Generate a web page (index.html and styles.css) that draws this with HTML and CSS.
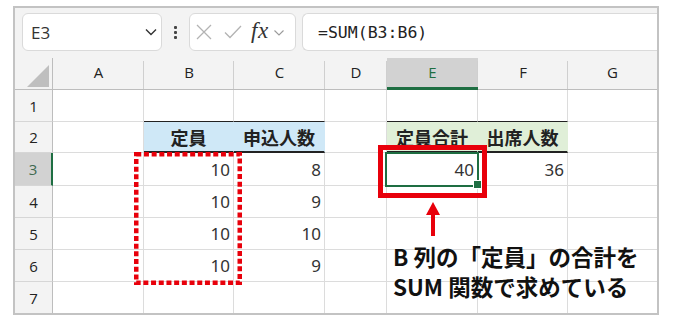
FILE: index.html
```html
<!DOCTYPE html>
<html lang="ja">
<head>
<meta charset="utf-8">
<title>SUM</title>
<link rel="stylesheet" href="styles.css">
</head>
<body>
<div class="frame">
  <div class="toolbar">
    <div class="namebox">
      <span class="nb-text">E3</span>
      <svg class="nb-chev" width="12" height="8" viewBox="0 0 12 8"><path d="M1 1.5 L6 6.5 L11 1.5" fill="none" stroke="#333" stroke-width="1.4"/></svg>
    </div>
    <div class="dots"><i></i><i></i><i></i></div>
    <div class="fxbox">
      <svg class="ic-x" width="16" height="16" viewBox="0 0 16 16"><path d="M1 1 L15 15 M15 1 L1 15" stroke="#b3b3b3" stroke-width="1.3" fill="none"/></svg>
      <svg class="ic-check" width="18" height="14" viewBox="0 0 18 14"><path d="M1 7.5 L6 12.5 L17 1" stroke="#b3b3b3" stroke-width="1.3" fill="none"/></svg>
      <span class="fx">fx</span>
      <svg class="ic-chev" width="10" height="6" viewBox="0 0 10 6"><path d="M0.5 0.5 L5 5 L9.5 0.5" stroke="#9a9a9a" stroke-width="1.1" fill="none"/></svg>
    </div>
    <div class="formula">=SUM(B3:B6)</div>
  </div>
  <div class="sheet">
    <div class="corner"></div>
    <div class="ch">A</div><div class="ch">B</div><div class="ch">C</div><div class="ch">D</div><div class="ch csel">E</div><div class="ch">F</div><div class="ch last">G</div>

    <div class="rh">1</div>
    <div class="c"></div><div class="c tt"></div><div class="c tt"></div><div class="c"></div><div class="c tt"></div><div class="c tt"></div><div class="c last"></div>

    <div class="rh">2</div>
    <div class="c"></div><div class="c hb">定員</div><div class="c hb">申込人数</div><div class="c"></div><div class="c hg">定員合計</div><div class="c hg">出席人数</div><div class="c last"></div>

    <div class="rh rsel">3</div>
    <div class="c"></div><div class="c num">10</div><div class="c num">8</div><div class="c"></div><div class="c num active">40<span class="selbox"></span></div><div class="c num">36</div><div class="c last"></div>

    <div class="rh">4</div>
    <div class="c"></div><div class="c num">10</div><div class="c num">9</div><div class="c"></div><div class="c"></div><div class="c"></div><div class="c last"></div>

    <div class="rh">5</div>
    <div class="c"></div><div class="c num">10</div><div class="c num">10</div><div class="c"></div><div class="c"></div><div class="c"></div><div class="c last"></div>

    <div class="rh">6</div>
    <div class="c"></div><div class="c num">10</div><div class="c num">9</div><div class="c"></div><div class="c"></div><div class="c"></div><div class="c last"></div>

    <div class="rh bottom">7</div>
    <div class="c bottom"></div><div class="c bottom"></div><div class="c bottom"></div><div class="c bottom"></div><div class="c bottom"></div><div class="c bottom"></div><div class="c bottom last"></div>

    <svg class="dotted" width="108" height="133" viewBox="0 0 108 133"><rect x="2.25" y="2.25" width="103.5" height="128.5" fill="none" stroke="#e8000b" stroke-width="4.5" stroke-dasharray="5 2.7"/></svg>
    <div class="redbox"></div>
    <svg class="arrow" width="16" height="34" viewBox="0 0 16 34"><polygon points="8,0 15,13 1,13" fill="#e8000b"/><rect x="6" y="12" width="4" height="22" fill="#e8000b"/></svg>
    <div class="note">B 列の「定員」の合計を<br>SUM 関数で求めている</div>
  </div>
</div>
</body>
</html>
```
FILE: styles.css
```css
* { box-sizing: border-box; }
html, body { margin: 0; padding: 0; background: #ffffff; }
body { font-family: "Noto Sans", "Noto Sans CJK JP", sans-serif; color: #222; }

.frame {
  margin: 6px 0 0 13px;
  width: 646px;
  border: 2px solid #c3c3c3;
  background: #f3f3f3;
}

.toolbar {
  height: 50px;
  display: flex;
  align-items: flex-start;
  padding: 5px 0 0 7px;
  background: #f3f3f3;
}
.namebox {
  width: 140px;
  height: 38px;
  background: #fff;
  border: 1px solid #dadada;
  border-radius: 6px;
  display: flex;
  align-items: center;
  justify-content: space-between;
  padding: 0 4px 0 8px;
}
.nb-text { font-family: "Open Sans", sans-serif; font-size: 17px; color: #333; }
.dots {
  width: 27px;
  height: 38px;
  display: flex;
  flex-direction: column;
  align-items: center;
  justify-content: center;
  gap: 2px;
}
.dots i { display: block; width: 3px; height: 3px; background: #444; border-radius: 1px; }
.fxbox {
  width: 107px;
  height: 38px;
  background: #fff;
  border: 1px solid #dadada;
  border-radius: 6px;
  display: flex;
  align-items: center;
  padding-left: 6px;
}
.ic-x { margin-right: 12px; }
.ic-check { margin-right: 9px; }
.fx {
  font-family: "Liberation Serif", serif;
  font-style: italic;
  font-weight: 400;
  font-size: 23px;
  color: #333;
  letter-spacing: 0.5px;
  margin-right: 5px;
  margin-top: -3px;
}
.ic-chev { margin-top: 2px; }
.formula {
  flex: 1;
  height: 38px;
  margin-left: 6px;
  background: #fff;
  border: 1px solid #dadada;
  border-right: none;
  border-radius: 6px 0 0 6px;
  display: flex;
  align-items: center;
  padding-left: 15px;
  font-family: "DejaVu Sans Mono", monospace;
  font-size: 16.5px;
  color: #222;
}

.sheet {
  position: relative;
  display: grid;
  grid-template-columns: 38px 91px 90px 91px 62px 91px 90px 89px;
  grid-template-rows: 32px 32px 31px 33px 32px 32px 32px 31px;
  background: #fff;
}
.corner {
  position: relative;
  background: #f3f3f3;
  border-right: 1px solid #bdbdbd;
  border-bottom: 1px solid #bdbdbd;
}
.corner::after {
  content: "";
  position: absolute;
  right: 3px;
  bottom: 2px;
  width: 22px;
  height: 22px;
  background: #bfbfbf;
  clip-path: polygon(100% 0, 100% 100%, 0 100%);
}
.ch {
  position: relative;
  background: #f3f3f3;
  border-bottom: 1px solid #bdbdbd;
  display: flex;
  align-items: center;
  justify-content: center;
  padding-bottom: 4px;
  font-family: "Open Sans", sans-serif;
  font-size: 15px;
  color: #222;
}
.ch::after {
  content: "";
  position: absolute;
  right: 0;
  top: 3px;
  bottom: 0;
  width: 1px;
  background: #cfcfcf;
}
.ch.last::after { display: none; }
.ch.csel {
  background: #d2d2d2;
  border-bottom: 3px solid #1e6e42;
  color: #1e6e42;
  padding-bottom: 2px;
}
.rh {
  background: #f3f3f3;
  border-right: 1px solid #bdbdbd;
  border-bottom: 1px solid #d6d6d6;
  display: flex;
  align-items: center;
  justify-content: center;
  font-family: "Open Sans", sans-serif;
  font-size: 15px;
  color: #222;
}
.rh.rsel {
  background: #d2d2d2;
  border-right: 2px solid #1e6e42;
  color: #3f6a50;
}
.c {
  border-right: 1px solid #dcdcdc;
  border-bottom: 1px solid #dcdcdc;
  display: flex;
  align-items: center;
  font-family: "Noto Sans", sans-serif;
  font-size: 17px;
  color: #333;
}
.c.last { border-right: none; }
.c.bottom, .rh.bottom { border-bottom: none; }
.c.tt { border-bottom: 1px solid #222; }
.num { justify-content: flex-end; padding-right: 3px; }
.hb, .hg {
  justify-content: center;
  font-family: "Noto Sans CJK JP", sans-serif;
  font-weight: 700;
  font-size: 18px;
  color: #222;
  border-bottom: 2px solid #222;
  border-right-color: transparent;
}
.hb { background: #cfe8f7; }
.hg { background: #e0efd8; }
.active { position: relative; }
.selbox {
  position: absolute;
  left: -2px;
  right: -2px;
  top: -1px;
  bottom: -2px;
  border: 2px solid #1e6e42;
}
.selbox::after {
  content: "";
  position: absolute;
  right: -5px;
  bottom: -4px;
  width: 7px;
  height: 7px;
  background: #1e6e42;
  border: 1px solid #fff;
}

.dotted { position: absolute; left: 119px; top: 94px; }
.redbox {
  position: absolute;
  left: 363px;
  top: 87px;
  width: 109px;
  height: 53px;
  border: 5px solid #e8000b;
}
.arrow { position: absolute; left: 410px; top: 144px; }
.note {
  position: absolute;
  left: 378px;
  top: 183px;
  font-family: "Noto Sans CJK JP", sans-serif;
  font-weight: 700;
  font-size: 22.5px;
  line-height: 30px;
  color: #111;
  white-space: nowrap;
}
```
